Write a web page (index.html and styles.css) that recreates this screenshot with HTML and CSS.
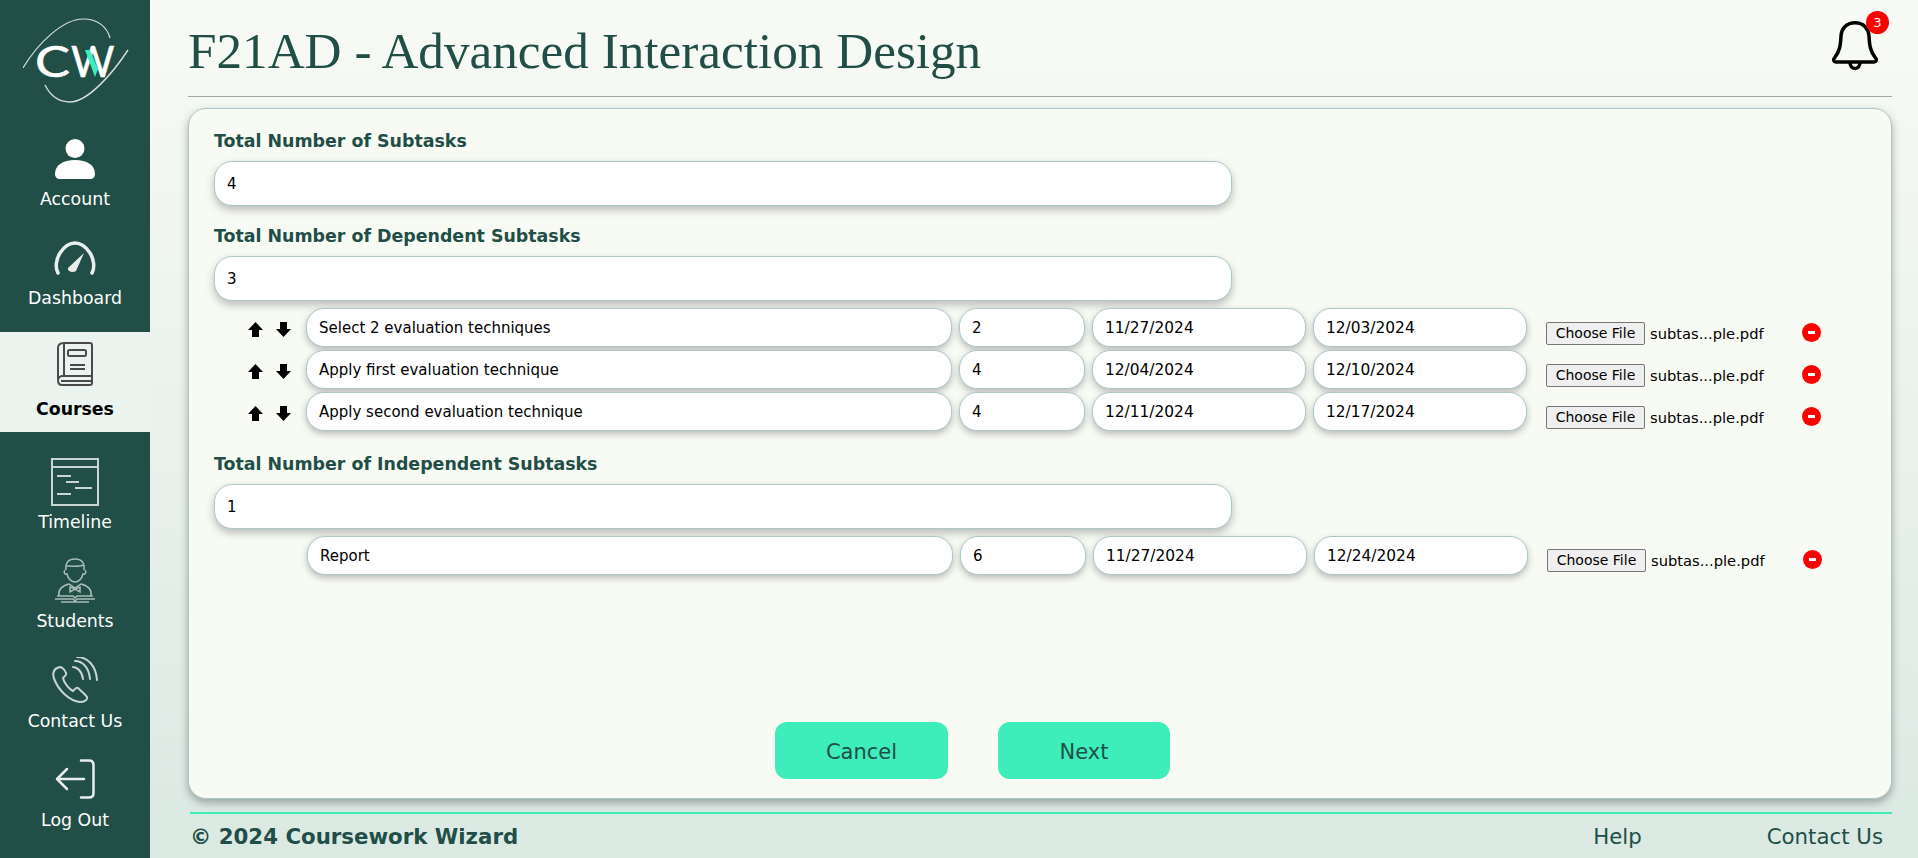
FILE: index.html

```html
<!DOCTYPE html>
<html lang="en">
<head>
    <meta charset="UTF-8">
    <title>F21AD - Advanced Interaction Design</title>
    <link rel="stylesheet" href="styles.css">
</head>
<body>
    <div class="app">
        <nav class="sidebar">
            <div class="logo">
                <svg width="106" height="86" viewBox="0 0 106 86" fill="none">
                    <path d="M0 50C15 25 40 1 60 1C75 1 84 9 87 20" stroke="#d5dfdb" stroke-width="1.200"/>
                    <path d="M105 32C90 55 65 84 47 84C35 84 27 77 22 67" stroke="#d5dfdb" stroke-width="1.400"/>
                    <text class="logo-text" transform="translate(12 59) scale(1.250 1)">C</text>
                    <text class="logo-text" x="48" y="59">W</text>
                    <path d="M62 32L72 59L75 51L67 32Z" fill="#3deebb"/>
                </svg>
            </div>
            <a class="nav-item nav-account">
                <svg width="40" height="40" viewBox="0 0 40 40" fill="#fff">
                    <circle cx="20" cy="9.500" r="9.500"/>
                    <path d="M0 35C0 26 8 21 20 21S40 26 40 35C40 38 38 40 35 40H5C2 40 0 38 0 35Z"/>
                </svg>
                <span>Account</span>
            </a>
            <a class="nav-item nav-dashboard">
                <svg width="42" height="34" viewBox="0 0 42 34" fill="none" stroke="#e8eeeb" stroke-width="3.500" stroke-linecap="round">
                    <path d="M4 32C1 27 2 18 6 12C10 6 15 2 21 2S32 6 36 12C40 18 41 27 38 32"/>
                    <path d="M14 27L30 12L22 30C19 32 13 31 14 27Z" fill="#e8eeeb" stroke="none"/>
                </svg>
                <span>Dashboard</span>
            </a>
            <a class="nav-item nav-courses active">
                <svg width="36" height="44" viewBox="0 0 36 44" fill="none" stroke="#4a4a4a" stroke-width="2">
                    <path d="M7 1H33C34 1 35 2 35 3V41C35 42 34 43 33 43H5C2 43 1 41 1 38V6C1 3 3 1 7 1Z"/>
                    <path d="M7 1V34M1 38C1 36 3 34 5 34H35M4 39H35"/>
                    <rect x="11" y="8" width="18" height="6" rx="1.500"/>
                    <path d="M13 27H28M13 23H28"/>
                </svg>
                <span>Courses</span>
            </a>
            <a class="nav-item nav-timeline">
                <svg width="48" height="48" viewBox="0 0 48 48" fill="none" stroke="#c8d5d1" stroke-width="2">
                    <rect x="1" y="1" width="46" height="46"/>
                    <path d="M1 9H47M6 18H20M15 24H28M24 30H41M6 36H20"/>
                </svg>
                <span>Timeline</span>
            </a>
            <a class="nav-item nav-students">
                <svg width="40" height="46" viewBox="0 0 40 46" fill="none" stroke="#a9bcb7" stroke-width="1.500">
                    <path d="M11 12C10 4 14 1 20 1S30 4 29 12"/>
                    <path d="M11 8C15 8 23 9 29 7M10 12C8 14 10 17 12 16C13 21 17 24 20 24S27 21 28 16C30 17 32 14 30 12"/>
                    <path d="M4 38C3 32 6 28 14 26L20 30L26 26C34 28 37 32 36 38"/>
                    <path d="M15 29L20 31L25 29V34L20 31L15 34Z"/>
                    <path d="M0 41H18L20 43L22 41H40M2 38H18L20 40L22 38H38M6 44H34"/>
                </svg>
                <span>Students</span>
            </a>
            <a class="nav-item nav-contact">
                <svg width="46" height="46" viewBox="0 0 46 46" fill="none" stroke="#c8d5d1" stroke-width="2" stroke-linecap="round">
                    <path d="M5 11C1 13 0 18 3 24C7 33 17 44 28 45C32 45 36 43 35 40C33 37 29 34 26 31C24 30 22 33 21 34C17 32 12 26 11 21C13 19 15 18 14 16C13 13 10 10 8 10Z"/>
                    <path d="M21 10C25 10 30 14 31 22M23 4C31 4 37 11 38 22M25 0C36 0 44 9 45 23"/>
                </svg>
                <span>Contact Us</span>
            </a>
            <a class="nav-item nav-logout">
                <svg width="40" height="40" viewBox="0 0 40 40" fill="none" stroke="#e8eeeb" stroke-width="2.500" stroke-linecap="round" stroke-linejoin="round">
                    <path d="M26 1.500H34C37 1.500 38.500 3 38.500 6V34C38.500 37 37 38.500 34 38.500H26"/>
                    <path d="M29 20H2M12 10L2 20L12 30"/>
                </svg>
                <span>Log Out</span>
            </a>
        </nav>

        <main class="main">
            <header class="page-header">
                <h1 class="page-title">F21AD - Advanced Interaction Design</h1>
                <div class="bell">
                    <svg width="46" height="50" viewBox="0 0 46 50" fill="none" stroke="#000" stroke-width="3.500" stroke-linejoin="round">
                        <path d="M23 1.800C14 1.800 9.500 8 9 15C8.500 24 8 30 2.500 37C1 39 1.500 41 4 41H42C44.500 41 45 39 43.500 37C38 30 37.500 24 37 15C36.500 8 32 1.800 23 1.800Z"/>
                        <path d="M18 41C18 45 20 47.500 23 47.500S28 45 28 41"/>
                    </svg>
                    <span class="badge">3</span>
                </div>
            </header>

            <section class="card">
                <label class="field-label">Total Number of Subtasks</label>
                <input class="field-input" type="text" value="4">

                <label class="field-label">Total Number of Dependent Subtasks</label>
                <input class="field-input" type="text" value="3">

                <div class="subtasks">
                    <div class="subtask">
                        <div class="arrows">
                            <svg class="arrow" width="15" height="15" viewBox="0 0 15 15"><path d="M7.500 0L15 8H11V15H4V8H0Z"/></svg>
                            <svg class="arrow" width="15" height="15" viewBox="0 0 15 15"><path d="M7.500 15L15 7H11V0H4V7H0Z"/></svg>
                        </div>
                        <input class="sub-input sub-name" type="text" value="Select 2 evaluation techniques">
                        <input class="sub-input sub-num" type="text" value="2">
                        <input class="sub-input sub-date" type="text" value="11/27/2024">
                        <input class="sub-input sub-date" type="text" value="12/03/2024">
                        <div class="file-cell">
                            <button class="file-btn" type="button">Choose File</button>
                            <span class="file-name">subtas...ple.pdf</span>
                        </div>
                        <span class="remove"></span>
                    </div>
                    <div class="subtask">
                        <div class="arrows">
                            <svg class="arrow" width="15" height="15" viewBox="0 0 15 15"><path d="M7.500 0L15 8H11V15H4V8H0Z"/></svg>
                            <svg class="arrow" width="15" height="15" viewBox="0 0 15 15"><path d="M7.500 15L15 7H11V0H4V7H0Z"/></svg>
                        </div>
                        <input class="sub-input sub-name" type="text" value="Apply first evaluation technique">
                        <input class="sub-input sub-num" type="text" value="4">
                        <input class="sub-input sub-date" type="text" value="12/04/2024">
                        <input class="sub-input sub-date" type="text" value="12/10/2024">
                        <div class="file-cell">
                            <button class="file-btn" type="button">Choose File</button>
                            <span class="file-name">subtas...ple.pdf</span>
                        </div>
                        <span class="remove"></span>
                    </div>
                    <div class="subtask">
                        <div class="arrows">
                            <svg class="arrow" width="15" height="15" viewBox="0 0 15 15"><path d="M7.500 0L15 8H11V15H4V8H0Z"/></svg>
                            <svg class="arrow" width="15" height="15" viewBox="0 0 15 15"><path d="M7.500 15L15 7H11V0H4V7H0Z"/></svg>
                        </div>
                        <input class="sub-input sub-name" type="text" value="Apply second evaluation technique">
                        <input class="sub-input sub-num" type="text" value="4">
                        <input class="sub-input sub-date" type="text" value="12/11/2024">
                        <input class="sub-input sub-date" type="text" value="12/17/2024">
                        <div class="file-cell">
                            <button class="file-btn" type="button">Choose File</button>
                            <span class="file-name">subtas...ple.pdf</span>
                        </div>
                        <span class="remove"></span>
                    </div>
                </div>

                <label class="field-label label-independent">Total Number of Independent Subtasks</label>
                <input class="field-input" type="text" value="1">

                <div class="subtasks">
                    <div class="subtask subtask-independent">
                        <input class="sub-input sub-name" type="text" value="Report">
                        <input class="sub-input sub-num" type="text" value="6">
                        <input class="sub-input sub-date" type="text" value="11/27/2024">
                        <input class="sub-input sub-date" type="text" value="12/24/2024">
                        <div class="file-cell">
                            <button class="file-btn" type="button">Choose File</button>
                            <span class="file-name">subtas...ple.pdf</span>
                        </div>
                        <span class="remove"></span>
                    </div>
                </div>

                <div class="actions">
                    <button class="action-btn btn-cancel" type="button">Cancel</button>
                    <button class="action-btn btn-next" type="button">Next</button>
                </div>
            </section>

            <footer class="footer">
                <span class="copyright">© 2024 Coursework Wizard</span>
                <div class="footer-links">
                    <a class="help-link">Help</a>
                    <a class="contact-link">Contact Us</a>
                </div>
            </footer>
        </main>
    </div>
</body>
</html>
```

FILE: styles.css

```css
* {
    box-sizing: border-box;
}
html, body {
    height: 100%;
}
body {
    margin: 0;
    font-family: "DejaVu Sans", sans-serif;
    background: linear-gradient(to bottom, #f8faf5, #dbe9e3);
    overflow: hidden;
}
.app {
    display: flex;
    height: 858px;
}

/* sidebar */
.sidebar {
    width: 150px;
    flex-shrink: 0;
    background: #214e47;
    display: flex;
    flex-direction: column;
}
.logo {
    height: 121px;
    padding: 18px 0 0 23px;
}
.logo-text {
    font-family: Lato, sans-serif;
    font-weight: 400;
    font-size: 42px;
    fill: #fff;
    stroke: #fff;
    stroke-width: 0.5px;
}
.nav-item {
    height: 100px;
    flex-shrink: 0;
    display: flex;
    flex-direction: column;
    align-items: center;
    justify-content: flex-end;
    padding-bottom: 12px;
    color: #fff;
    font-size: 17.33px;
    line-height: 20px;
}
.nav-item span {
    margin-top: 10px;
}
.nav-dashboard {
    margin-top: -1px;
}
.nav-dashboard svg {
    margin-bottom: 3px;
}
.nav-courses {
    margin-top: 12px;
    padding-bottom: 13px;
}
.nav-courses svg {
    margin-bottom: 3px;
}
.active {
    background: #eaf3ed;
    color: #000;
    font-weight: bold;
}
.nav-timeline {
    margin-top: 12px;
}
.nav-timeline svg {
    margin-bottom: -4px;
}
.nav-students {
    margin-top: -1px;
}
.nav-students svg {
    margin-bottom: -3px;
}
.nav-contact svg {
    margin-bottom: -2px;
}
.nav-logout {
    margin-top: -1px;
}
.nav-logout svg {
    margin-bottom: 1px;
}

/* main column */
.main {
    flex: 1;
    min-width: 0;
    padding: 0 26px 0 38px;
    display: flex;
    flex-direction: column;
}
.page-header {
    height: 97px;
    flex-shrink: 0;
    border-bottom: 1px solid #9fa8a5;
    display: flex;
    justify-content: space-between;
    align-items: flex-start;
}
.page-title {
    margin: 20px 0 0;
    font-family: "Liberation Serif", serif;
    font-weight: normal;
    font-size: 51.2px;
    line-height: 62px;
    color: #214e47;
}
.bell {
    position: relative;
    margin: 21px 14px 0 0;
}
.badge {
    position: absolute;
    top: -10px;
    right: -11px;
    width: 23px;
    height: 23px;
    border-radius: 50%;
    background: #f00;
    color: #fff;
    font-size: 13px;
    line-height: 23px;
    text-align: center;
}

/* card */
.card {
    margin-top: 11px;
    height: 691px;
    flex-shrink: 0;
    background: #f8faf4;
    border: 1px solid #a9c8c8;
    border-radius: 18px;
    box-shadow: 0 4px 8px rgba(0,0,0,0.3);
    padding: 22px 25px 19px;
    display: flex;
    flex-direction: column;
    align-items: flex-start;
}
.field-label {
    display: block;
    font-size: 17.4px;
    line-height: 21px;
    font-weight: bold;
    color: #214e47;
    margin-bottom: 9px;
}
.field-input {
    width: 1018px;
    height: 45px;
    background: #fff;
    border: 1px solid #a9c8c8;
    border-radius: 18px;
    box-shadow: 0 4px 8px rgba(0,0,0,0.25);
    padding: 0 12px;
    font-family: "DejaVu Sans", sans-serif;
    font-size: 15px;
    color: #000;
    margin-bottom: 20px;
    outline: none;
}
.subtasks {
    margin-top: -13px;
    display: flex;
    flex-direction: column;
    gap: 3px;
}
.label-independent {
    margin-top: 23px;
}
.subtask {
    display: flex;
    align-items: center;
    gap: 7px;
    padding-left: 34px;
}
.subtask-independent {
    padding-left: 93px;
}
.subtask-independent .file-cell {
    margin-top: 9px;
}
.subtask-independent .remove {
    margin-top: 7px;
}
.arrows {
    width: 51px;
    display: flex;
    gap: 13px;
    margin-top: 14px;
    align-self: flex-start;
}
.arrow {
    fill: #000;
}
.sub-input {
    height: 39px;
    background: #fff;
    border: 1px solid #a9c8c8;
    border-radius: 18px;
    box-shadow: 0 3px 7px rgba(0,0,0,0.25);
    padding: 0 12px;
    font-family: "DejaVu Sans", sans-serif;
    font-size: 15px;
    color: #000;
    outline: none;
}
.sub-name {
    width: 646px;
}
.sub-num {
    width: 126px;
}
.sub-date {
    width: 214px;
    font-size: 15.4px;
}
.file-cell {
    margin: 11px 0 0 12px;
    width: 249px;
    display: flex;
    align-items: center;
    gap: 5px;
}
.file-btn {
    width: 99px;
    height: 23px;
    padding: 0;
    background: #efefef;
    border: 1px solid #767676;
    border-radius: 2px;
    font-family: "DejaVu Sans", sans-serif;
    font-size: 14px;
    color: #000;
}
.file-name {
    font-size: 14.7px;
    color: #000;
}
.remove {
    width: 19px;
    height: 19px;
    border-radius: 50%;
    background: #f00;
    margin-top: 9px;
    display: flex;
    align-items: center;
    justify-content: center;
}
.remove::before {
    content: "";
    width: 7px;
    height: 3px;
    background: #fff;
}

/* buttons */
.actions {
    margin-top: auto;
    align-self: stretch;
    display: flex;
    padding-left: 561px;
    gap: 50px;
}
.action-btn {
    height: 57px;
    padding: 2px 0 0;
    background: #3deebb;
    border: none;
    border-radius: 12px;
    font-family: "DejaVu Sans", sans-serif;
    font-size: 21px;
    color: #214e47;
}
.btn-cancel {
    width: 173px;
}
.btn-next {
    width: 172px;
}

/* footer */
.footer {
    margin: 13px 0 0 2px;
    border-top: 2px solid #3deebb;
    display: flex;
    justify-content: space-between;
    padding: 11px 9px 0 0;
    font-size: 21.3px;
    line-height: 24px;
    color: #214e47;
}
.copyright {
    font-weight: bold;
}
.footer-links {
    display: flex;
    gap: 125px;
}
```
